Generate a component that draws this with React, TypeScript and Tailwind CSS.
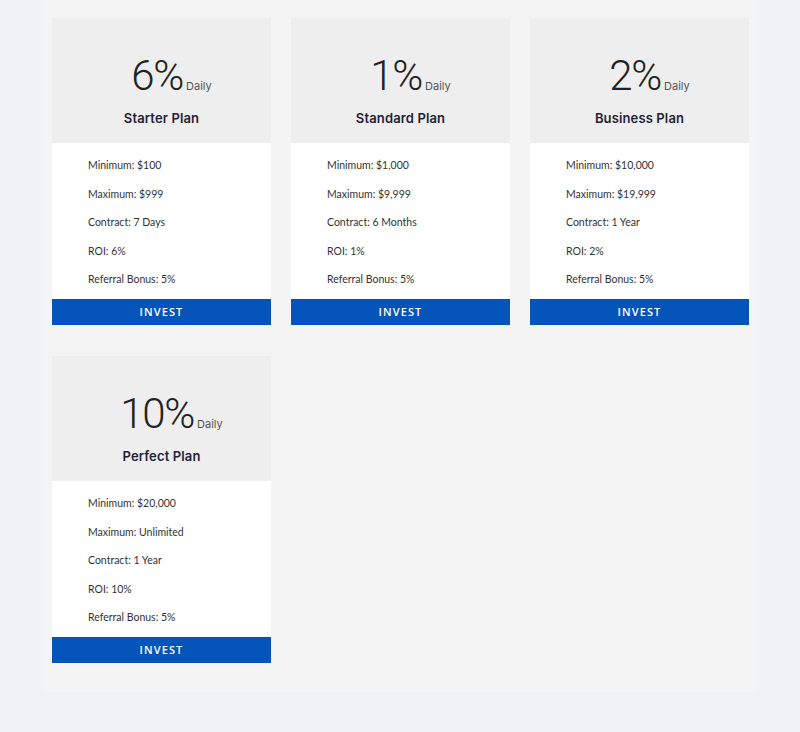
import React from 'react';

interface Plan {
  rate: string;
  name: string;
  min: string;
  max: string;
  contract: string;
  roi: string;
}

const plans: Plan[] = [
  { rate: '6%', name: 'Starter Plan', min: '$100', max: '$999', contract: '7 Days', roi: '6%' },
  { rate: '1%', name: 'Standard Plan', min: '$1,000', max: '$9,999', contract: '6 Months', roi: '1%' },
  { rate: '2%', name: 'Business Plan', min: '$10,000', max: '$19,999', contract: '1 Year', roi: '2%' },
  { rate: '10%', name: 'Perfect Plan', min: '$20,000', max: 'Unlimited', contract: '1 Year', roi: '10%' },
];

function PlanCard({ plan }: { plan: Plan }) {
  const rows = [
    `Minimum: ${plan.min}`,
    `Maximum: ${plan.max}`,
    `Contract: ${plan.contract}`,
    `ROI: ${plan.roi}`,
    'Referral Bonus: 5%',
  ];
  return (
    <div className="flex flex-col">
      <div className="h-[125px] bg-[#eeeeef] pt-[36.5px] flex flex-col items-center">
        <div className="flex items-baseline ml-[20px]">
          <span className="text-[42px] leading-[42px] font-light tracking-[-0.03em] text-[#222] font-['Roboto',sans-serif]">{plan.rate}</span>
          <span className="text-[11px] text-[#555] ml-[3px] font-['Inter',sans-serif]">Daily</span>
        </div>
        <div className="mt-[11.5px] text-[13px] leading-[20px] font-semibold tracking-[0.01em] text-[#1e2235] font-['Inter',sans-serif]">{plan.name}</div>
      </div>
      <div className="bg-white pt-[9px] pb-[4.5px] pl-[36px] font-['Lato',sans-serif]">
        {rows.map((r, i) => (
          <div key={i} className="h-[28.5px] flex items-center text-[10.5px] text-[#333]">{r}</div>
        ))}
      </div>
      <button className="h-[26px] bg-[#0554b9] text-white text-[11px] font-semibold tracking-[0.1em] font-['Open_Sans',sans-serif]">
        INVEST
      </button>
    </div>
  );
}

export default function App() {
  return (
    <div className="min-h-[732px] bg-[#f1f2f4]">
      <div className="ml-[42px] w-[716px] bg-[#f4f4f5] pt-[18px] pb-[29px] px-[10px]">
        <div className="grid grid-cols-[219px_219px_219px] gap-x-[20px] gap-y-[31px]">
          {plans.map((p) => (
            <PlanCard key={p.name} plan={p} />
          ))}
        </div>
      </div>
    </div>
  );
}
